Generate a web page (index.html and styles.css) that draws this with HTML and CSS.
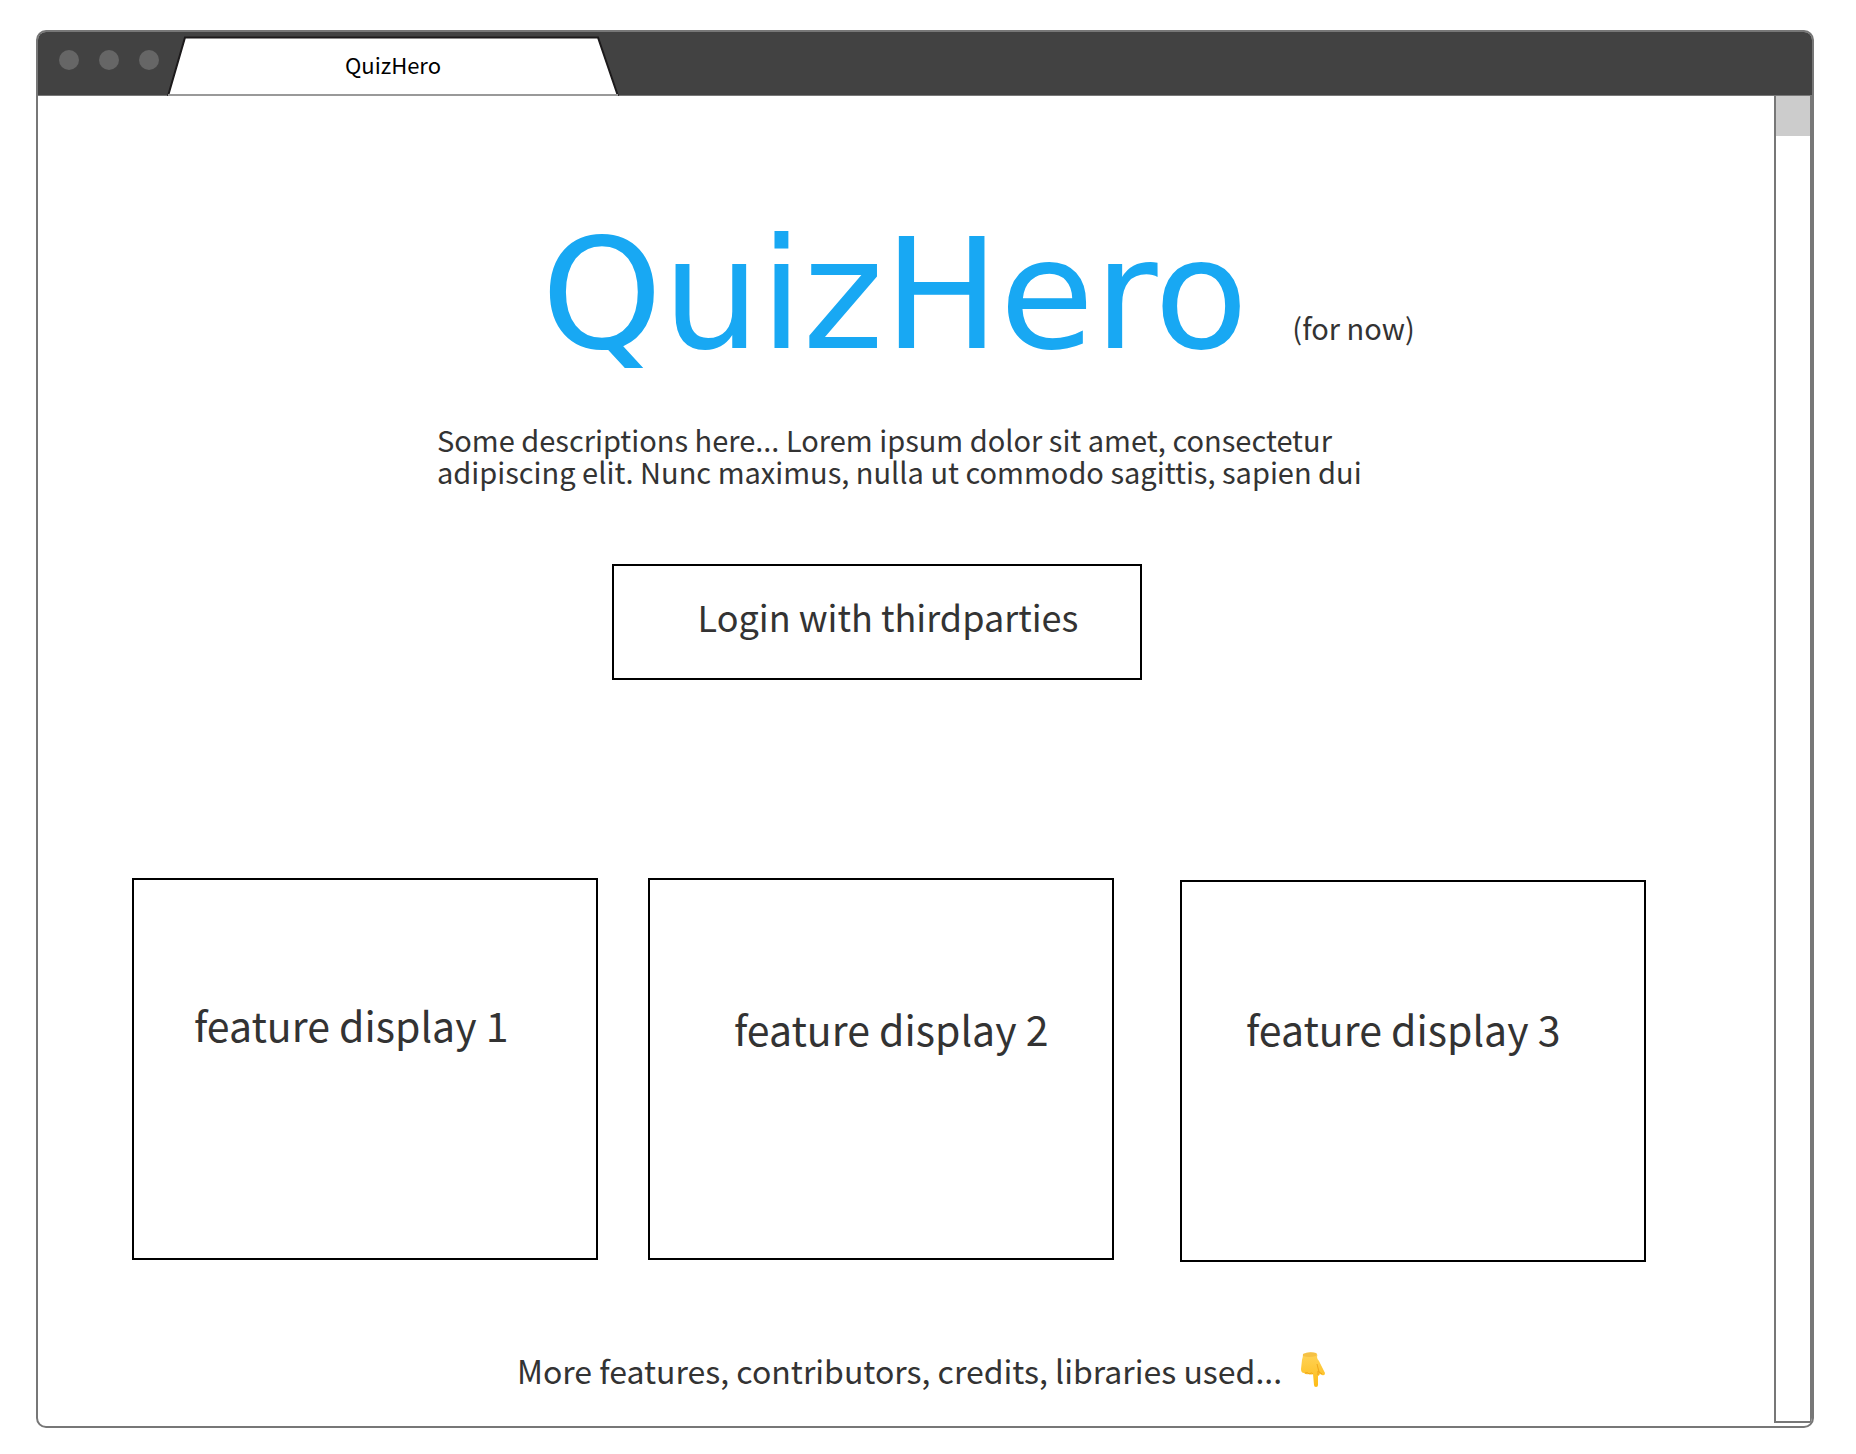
FILE: index.html
```html
<!DOCTYPE html>
<html lang="en">
<head>
<meta charset="utf-8">
<title>QuizHero</title>
<link rel="stylesheet" href="styles.css">
</head>
<body>
<div class="window">
  <header class="titlebar">
    <div class="dots"><span class="dot"></span><span class="dot"></span><span class="dot"></span></div>
    <div class="tab">
      <svg class="tab-shape" viewBox="0 0 452 60" aria-hidden="true">
        <path d="M1 60L18 2H431L451 60z" fill="#fff"/>
        <path d="M1 60L18 1.500H431L451 60" fill="none" stroke="#1c1a1b" stroke-width="2"/>
        <path d="M1 59H451" stroke="#999" stroke-width="2"/>
      </svg>
      <span class="tab-label">QuizHero</span>
    </div>
  </header>
  <div class="viewport">
    <main class="page">
      <div class="brand">
        <h1 class="brand-name">QuizHero</h1>
        <span class="brand-note">(for now)</span>
      </div>
      <p class="intro">Some descriptions here... Lorem ipsum dolor sit amet, consectetur<br>adipiscing elit. Nunc maximus, nulla ut commodo sagittis, sapien dui</p>
      <div class="actions"><button class="login" type="button">Login with thirdparties</button></div>
      <section class="features">
        <article class="card card-first"><h2 class="card-title">feature display 1</h2></article>
        <article class="card card-second"><h2 class="card-title">feature display 2</h2></article>
        <article class="card card-third"><h2 class="card-title">feature display 3</h2></article>
      </section>
      <footer class="more">
        <span>More features, contributors, credits, libraries used...</span>
        <svg class="hand" viewBox="0 0 24 36" role="img" aria-label="pointing down">
          <defs><linearGradient id="skin" x1="0" y1="0" x2="0" y2="1"><stop offset="0" stop-color="#ffd45a"/><stop offset="1" stop-color="#fdbb15"/></linearGradient></defs>
          <path d="M2 2Q8-1 15 1Q17 2 16 5Q16 7 18 9L24 21Q24 24 21 23L19 22Q18 24 17 24V33Q17 35 15 35Q13 35 13 33L12 22Q10 23 8 22Q5 23 3 21Q0 21 0 17L1 8Q2 5 2 2z" fill="url(#skin)"/>
          <path d="M16 12L18 20L21 22M17 19V23M4 21Q7 20 8 22Q11 20 12 22" fill="none" stroke="#e8960c" stroke-opacity=".7" stroke-width="1"/>
          <path d="M2 2Q8-1 15 1Q16 2 15 4Q8 6 2 4z" fill="#eeb63a" fill-opacity=".6"/>
        </svg>
      </footer>
    </main>
    <div class="scrollbar"><div class="thumb"></div></div>
  </div>
</div>
</body>
</html>
```
FILE: styles.css
```css
* { box-sizing: border-box; }

body {
  margin: 0;
  min-height: 100vh;
  padding: 30px 42px 26px 36px;
  display: flex;
  background: #fff;
  color: #333;
  font-family: "Noto Sans CJK SC", "Noto Sans", sans-serif;
}

h1, h2, p { margin: 0; font-weight: 400; }

.window {
  flex: 1;
  display: flex;
  flex-direction: column;
  border: 2px solid #777;
  border-radius: 10px;
  overflow: hidden;
}

.titlebar {
  display: flex;
  height: 65px;
  margin: -1px -1px 0;
  padding-left: 22px;
  background: #424242;
  border-bottom: 1px solid #777;
}

.dots { display: flex; gap: 20px; padding-top: 19px; }
.dot { width: 20px; height: 20px; border-radius: 50%; background: #666; }

.tab {
  position: relative;
  width: 452px;
  height: 60px;
  margin: 5px 0 0 8px;
  display: flex;
  justify-content: center;
  color: #000;
}
.tab-shape { position: absolute; inset: 0; width: 100%; height: 100%; }
.tab-label { position: relative; font-size: 22px; line-height: 56px; }

.viewport { flex: 1; display: flex; }

.page { flex: 1; padding: 108px 128px 0 94px; }

.brand {
  display: flex;
  justify-content: center;
  align-items: flex-end;
  gap: 44px;
  padding-left: 178px;
}
.brand-name {
  font-family: "DejaVu Sans", sans-serif;
  font-size: 154px;
  line-height: 182px;
  color: #18a8f3;
}
.brand-note {
  margin-bottom: 43px;
  font-size: 29px;
  line-height: 32px;
}

.intro {
  width: 904px;
  margin: 37px auto 0;
  font-size: 29px;
  line-height: 32px;
  white-space: nowrap;
}

.actions { display: flex; justify-content: center; margin-top: 77px; padding-right: 24px; }
.login {
  width: 530px;
  height: 116px;
  padding: 0 0 12px 22px;
  border: 2px solid #000;
  background: #fff;
  color: inherit;
  font-family: inherit;
  font-size: 36px;
}

.features { display: flex; align-items: flex-start; gap: 50px; margin-top: 198px; }
.card {
  flex: 1;
  height: 382px;
  border: 2px solid #000;
}
.card-third { margin: 2px 0 0 16px; }
.card-title {
  padding-top: 118px;
  font-size: 41px;
  line-height: 60px;
  white-space: nowrap;
}
.card-first .card-title { padding: 114px 0 0 60px; }
.card-second .card-title { padding-left: 84px; }
.card-third .card-title { padding: 116px 0 0 64px; }

.more {
  display: flex;
  justify-content: center;
  gap: 19px;
  margin-top: 82px;
  padding-left: 64px;
  font-size: 32px;
  line-height: 52px;
}
.hand { width: 24px; height: 36px; margin-top: 8px; }

.scrollbar {
  width: 38px;
  margin-bottom: 3px;
  border: solid #777;
  border-width: 0 2px 2px;
}
.thumb { height: 40px; background: #ccc; }
```
